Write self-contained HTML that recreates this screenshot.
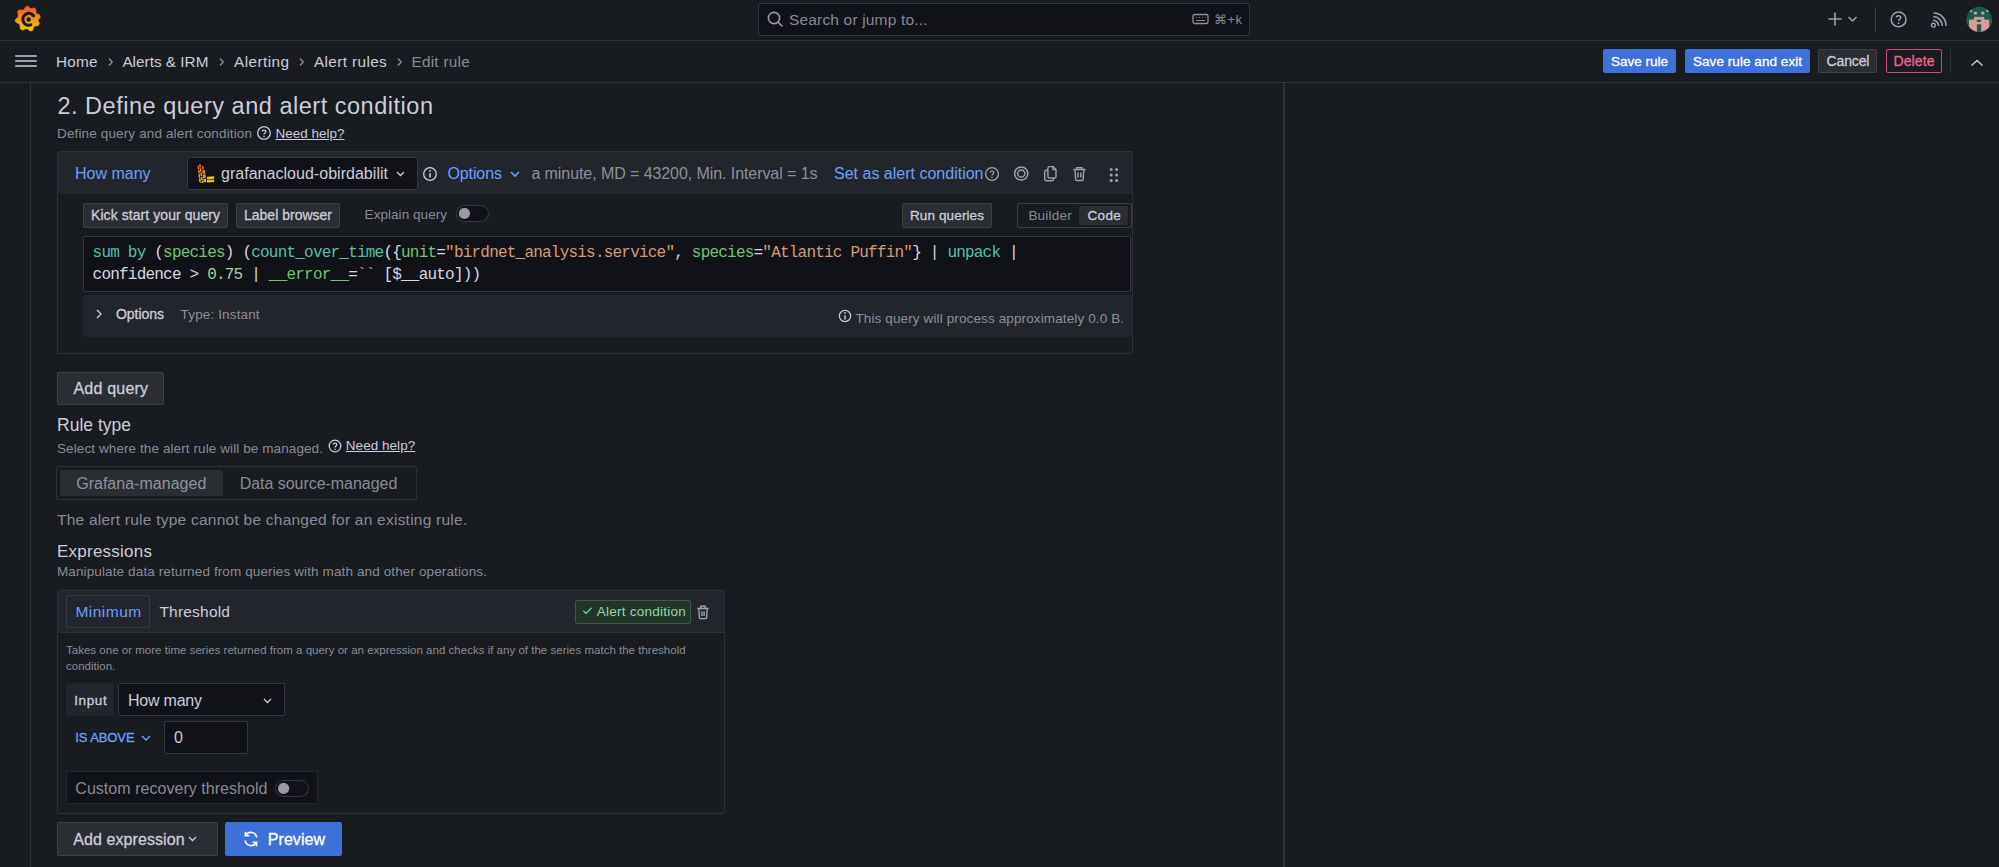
<!DOCTYPE html>
<html><head><meta charset="utf-8"><style>
html,body{margin:0;padding:0;}
body{width:1999px;height:867px;overflow:hidden;position:relative;background:#181b1f;font-family:'Liberation Sans', sans-serif;}
.a{position:absolute;}
.t{white-space:nowrap;line-height:1;}
.bl{display:inline-block;width:0;height:0;vertical-align:baseline;}
svg{overflow:visible;}
</style></head><body>
<div class="a" style="left:0px;top:40px;width:1999px;height:1px;background:rgba(204,204,220,0.12);"></div>
<svg class="a" style="left:10px;top:2px;" width="36" height="36" viewBox="0 0 36 36"><defs><linearGradient id="lg" gradientUnits="userSpaceOnUse" x1="0" y1="5" x2="0" y2="29"><stop offset="0" stop-color="#f05a28"/><stop offset="1" stop-color="#fbca0a"/></linearGradient></defs>
<path fill="url(#lg)" stroke="url(#lg)" stroke-width="0.6" stroke-linejoin="round" d="M13.77 7.76 L16.26 4.29 L18.46 4.22 L21.19 7.50 L19.86 7.12 L23.91 5.78 L25.73 7.01 L26.01 11.26 L26.01 11.26 L29.85 13.12 L30.31 15.26 L27.55 18.52 L27.66 17.66 L29.48 21.52 L28.49 23.48 L24.29 24.27 L24.03 24.49 L22.52 28.48 L20.42 29.12 L16.94 26.66 L16.25 26.58 L12.28 28.12 L10.39 26.99 L9.89 22.76 L9.40 22.05 L5.63 20.06 L5.25 17.90 L8.12 14.74 L8.38 13.74 L7.48 9.57 L8.89 7.89 L13.15 8.06Z"/>
<path fill="none" stroke="#181b1f" stroke-width="3.1" stroke-linecap="round" d="M23.57 13.83 A5.9 5.9 0 1 0 20.82 22.84"/>
<circle cx="18.6" cy="17.5" r="2.2" fill="#181b1f"/></svg>
<div class="a" style="left:758px;top:3px;width:492px;height:33px;background:#111217;border:1px solid rgba(204,204,220,0.20);box-sizing:border-box;border-radius:3px;"></div>
<svg class="a" style="left:767px;top:11px;" width="16" height="16" viewBox="0 0 16 16"><circle cx="7" cy="7" r="5.6" fill="none" stroke="#9a9aa8" stroke-width="1.6"/><path d="M11.2 11.2 L15 15" stroke="#9a9aa8" stroke-width="1.6" stroke-linecap="round"/></svg>
<div class="a t" id="t0" style="left:789.00px;top:11.50px;font-size:15.5px;color:rgba(204,204,220,0.65);font-weight:400;font-family:'Liberation Sans', sans-serif;letter-spacing:0.170px;"><i class="bl"></i>Search or jump to...</div>
<svg class="a" style="left:1192px;top:13px;" width="18" height="12" viewBox="0 0 18 12"><rect x="1" y="1.5" width="15" height="9" rx="1.5" fill="none" stroke="#8e8e9a" stroke-width="1.3"/><path d="M4 4.5h1M7 4.5h1M10 4.5h1M13 4.5h0.5M4 7.5h9" stroke="#8e8e9a" stroke-width="1.1"/></svg>
<div class="a t" id="t1" style="left:1214.00px;top:13.00px;font-size:13px;color:rgba(204,204,220,0.65);font-weight:400;font-family:'Liberation Sans', sans-serif;letter-spacing:0.453px;"><i class="bl"></i>&#8984;+k</div>
<svg class="a" style="left:1827px;top:11px;" width="16" height="16" viewBox="0 0 16 16"><path d="M8 1.5V14.5M1.5 8H14.5" stroke="#9fa0ab" stroke-width="1.6"/></svg>
<svg class="a" style="left:1847px;top:15px;" width="11" height="8" viewBox="0 0 11 8"><path d="M1.5 2 L5.5 6 L9.5 2" fill="none" stroke="#9fa0ab" stroke-width="1.5"/></svg>
<div class="a" style="left:1875px;top:7px;width:1px;height:25px;background:rgba(204,204,220,0.20);"></div>
<svg class="a" style="left:1889px;top:10px;" width="20" height="20" viewBox="0 0 20 20"><circle cx="9.6" cy="9.4" r="7.4" fill="none" stroke="#9fa0ab" stroke-width="1.5"/><path d="M7.4 7.6 C7.4 5.2 11.8 5.2 11.8 7.6 C11.8 9.2 9.6 9.2 9.6 11" fill="none" stroke="#9fa0ab" stroke-width="1.5"/><circle cx="9.6" cy="13.2" r="0.9" fill="#9fa0ab"/></svg>
<svg class="a" style="left:1930px;top:11px;" width="20" height="18" viewBox="0 0 20 18"><circle cx="3.4" cy="14.2" r="1.9" fill="none" stroke="#9fa0ab" stroke-width="1.4"/><path d="M3 9.2 A5.5 5.5 0 0 1 8.6 15" fill="none" stroke="#9fa0ab" stroke-width="1.5"/><path d="M3.2 5.6 A9 9 0 0 1 12.2 15" fill="none" stroke="#9fa0ab" stroke-width="1.5"/><path d="M3.6 2 A12.5 12.5 0 0 1 16 15" fill="none" stroke="#9fa0ab" stroke-width="1.5"/></svg>
<svg class="a" style="left:1966px;top:6px;" width="27" height="27" viewBox="0 0 27 27"><defs><clipPath id="cp"><circle cx="13.25" cy="13.35" r="12.6"/></clipPath></defs>
<g clip-path="url(#cp)"><rect width="27" height="27" fill="#145e4e"/>
<rect x="0" y="13.6" width="27" height="14" fill="#dc999c"/>
<rect x="8" y="10.9" width="10.3" height="3" fill="#dc999c"/>
<rect x="0" y="13" width="3" height="14" fill="#145e4e"/><rect x="23.2" y="13" width="4" height="14" fill="#145e4e"/><rect x="10.7" y="13.7" width="4.5" height="2.2" rx="1" fill="#145e4e"/>
<rect x="10.9" y="18.3" width="4.3" height="10" fill="#145e4e"/>
<rect x="7.8" y="5.8" width="3.1" height="2.6" fill="#dc999c"/><rect x="15.4" y="5.8" width="2.9" height="2.6" fill="#dc999c"/>
<rect x="3.2" y="3.5" width="2.7" height="2.5" fill="#dc999c"/><rect x="20.4" y="3.5" width="2.6" height="2.5" fill="#dc999c"/>
</g></svg>
<div class="a" style="left:0px;top:82px;width:1999px;height:1px;background:rgba(204,204,220,0.12);"></div>
<svg class="a" style="left:14px;top:54px;" width="24" height="14" viewBox="0 0 24 14"><path d="M1.8 2h20.4M1.8 7h20.4M1.8 12h20.4" stroke="#ccccdc" stroke-width="1.6" stroke-linecap="round"/></svg>
<div class="a t" id="t2" style="left:56.00px;top:53.50px;font-size:15.3px;color:#ccccdc;font-weight:400;font-family:'Liberation Sans', sans-serif;letter-spacing:0.262px;"><i class="bl"></i>Home</div>
<svg class="a" style="left:106.5px;top:57px;" width="7" height="10" viewBox="0 0 7 10"><path d="M2 1.5 L5.2 5 L2 8.5" fill="none" stroke="#8e8e9a" stroke-width="1.3"/></svg>
<div class="a t" id="t3" style="left:122.40px;top:53.50px;font-size:15.3px;color:#ccccdc;font-weight:400;font-family:'Liberation Sans', sans-serif;letter-spacing:0.014px;"><i class="bl"></i>Alerts &amp; IRM</div>
<svg class="a" style="left:217.7px;top:57px;" width="7" height="10" viewBox="0 0 7 10"><path d="M2 1.5 L5.2 5 L2 8.5" fill="none" stroke="#8e8e9a" stroke-width="1.3"/></svg>
<div class="a t" id="t4" style="left:234.00px;top:53.50px;font-size:15.3px;color:#ccccdc;font-weight:400;font-family:'Liberation Sans', sans-serif;letter-spacing:0.446px;"><i class="bl"></i>Alerting</div>
<svg class="a" style="left:297.6px;top:57px;" width="7" height="10" viewBox="0 0 7 10"><path d="M2 1.5 L5.2 5 L2 8.5" fill="none" stroke="#8e8e9a" stroke-width="1.3"/></svg>
<div class="a t" id="t5" style="left:314.00px;top:53.50px;font-size:15.3px;color:#ccccdc;font-weight:400;font-family:'Liberation Sans', sans-serif;letter-spacing:0.384px;"><i class="bl"></i>Alert rules</div>
<svg class="a" style="left:395.5px;top:57px;" width="7" height="10" viewBox="0 0 7 10"><path d="M2 1.5 L5.2 5 L2 8.5" fill="none" stroke="#8e8e9a" stroke-width="1.3"/></svg>
<div class="a t" id="t6" style="left:411.40px;top:53.50px;font-size:15.3px;color:rgba(204,204,220,0.65);font-weight:400;font-family:'Liberation Sans', sans-serif;letter-spacing:0.284px;"><i class="bl"></i>Edit rule</div>
<div class="a" style="left:1603px;top:49px;width:73px;height:24px;background:#3d71d9;border-radius:2px;"></div>
<div class="a t" id="t7" style="left:1611.00px;top:54.62px;font-size:13.5px;color:#ffffff;font-weight:400;-webkit-text-stroke:0.3px #ffffff;font-family:'Liberation Sans', sans-serif;letter-spacing:-0.006px;"><i class="bl"></i>Save rule</div>
<div class="a" style="left:1685px;top:49px;width:125px;height:24px;background:#3d71d9;border-radius:2px;"></div>
<div class="a t" id="t8" style="left:1693.00px;top:54.62px;font-size:13.5px;color:#ffffff;font-weight:400;-webkit-text-stroke:0.3px #ffffff;font-family:'Liberation Sans', sans-serif;letter-spacing:0.054px;"><i class="bl"></i>Save rule and exit</div>
<div class="a" style="left:1818px;top:49px;width:59px;height:24px;background:rgba(204,204,220,0.10);border:1px solid rgba(204,204,220,0.12);box-sizing:border-box;border-radius:2px;"></div>
<div class="a t" id="t9" style="left:1826.50px;top:53.60px;font-size:14px;color:#ccccdc;font-weight:400;-webkit-text-stroke:0.3px #ccccdc;font-family:'Liberation Sans', sans-serif;letter-spacing:-0.119px;"><i class="bl"></i>Cancel</div>
<div class="a" style="left:1886px;top:49px;width:56px;height:24px;border:1px solid #cc4a73;box-sizing:border-box;border-radius:2px;"></div>
<div class="a t" id="t10" style="left:1893.50px;top:53.60px;font-size:14px;color:#f2628f;font-weight:400;-webkit-text-stroke:0.3px #f2628f;font-family:'Liberation Sans', sans-serif;letter-spacing:0.106px;"><i class="bl"></i>Delete</div>
<div class="a" style="left:1950px;top:49px;width:1px;height:24px;background:rgba(204,204,220,0.12);"></div>
<svg class="a" style="left:1970px;top:58.5px;" width="14" height="9" viewBox="0 0 14 9"><path d="M1.5 6.5 L7 1.5 L12.5 6.5" fill="none" stroke="#ccccdc" stroke-width="1.4"/></svg>
<div class="a" style="left:30px;top:82px;width:1px;height:785px;background:rgba(204,204,220,0.12);"></div>
<div class="a" style="left:1283px;top:82px;width:2px;height:785px;background:rgba(204,204,220,0.12);"></div>
<div class="a t" id="t11" style="left:57.40px;top:94.71px;font-size:23.5px;color:#ccccdc;font-weight:400;font-family:'Liberation Sans', sans-serif;letter-spacing:0.519px;"><i class="bl"></i>2. Define query and alert condition</div>
<div class="a t" id="t12" style="left:57.00px;top:127.31px;font-size:13.5px;color:rgba(204,204,220,0.65);font-weight:400;font-family:'Liberation Sans', sans-serif;letter-spacing:0.141px;"><i class="bl"></i>Define query and alert condition</div>
<svg class="a" style="left:255.5px;top:125px;" width="16" height="16" viewBox="0 0 16 16"><circle cx="8" cy="8" r="6.3" fill="none" stroke="#ccccdc" stroke-width="1.3"/><path d="M6.2 6.6 C6.2 4.6 9.8 4.6 9.8 6.6 C9.8 8 8 8 8 9.5" fill="none" stroke="#ccccdc" stroke-width="1.3"/><circle cx="8" cy="11.3" r="0.8" fill="#ccccdc"/></svg>
<div class="a t" id="t13" style="left:275.40px;top:127.31px;font-size:13.5px;color:#ccccdc;font-weight:400;font-family:'Liberation Sans', sans-serif;letter-spacing:0.004px;text-decoration:underline;"><i class="bl"></i>Need help?</div>
<div class="a" style="left:57px;top:151px;width:1076px;height:203px;border:1px solid rgba(204,204,220,0.12);box-sizing:border-box;border-radius:2px;"></div>
<div class="a" style="left:58px;top:152px;width:1074px;height:42px;background:#22252b;"></div>
<div class="a t" id="t14" style="left:75.00px;top:166.40px;font-size:16px;color:#6e9fff;font-weight:400;font-family:'Liberation Sans', sans-serif;letter-spacing:0.003px;"><i class="bl"></i>How many</div>
<div class="a" style="left:187px;top:157px;width:231px;height:33px;background:#111217;border:1px solid rgba(204,204,220,0.20);box-sizing:border-box;border-radius:2px;"></div>
<svg class="a" style="left:190px;top:160px;" width="30" height="30" viewBox="0 0 30 30"><defs><linearGradient id="lk" gradientUnits="userSpaceOnUse" x1="0" y1="4" x2="0" y2="23"><stop offset="0" stop-color="#f05a28"/><stop offset="1" stop-color="#f2cc0c"/></linearGradient></defs>
<g stroke="url(#lk)" stroke-width="1.5" fill="none" stroke-dasharray="3.5 0.8"><path d="M8.2 5.6 L10.2 23"/><path d="M9.8 4 L12.4 23"/><path d="M12.6 6 L14.4 23"/><path d="M14.2 10 L15.6 22"/></g>
<g fill="#e9c21e"><path d="M17 16.8 L24.2 16.2 V18.8 L17 19.4Z"/><path d="M17 20 L24.2 19.6 V22 L17 22.4Z"/></g></svg>
<div class="a t" id="t15" style="left:221.00px;top:166.00px;font-size:16px;color:#ccccdc;font-weight:400;font-family:'Liberation Sans', sans-serif;letter-spacing:0.029px;"><i class="bl"></i>grafanacloud-obirdabilit</div>
<svg class="a" style="left:395px;top:169.5px;" width="12" height="8" viewBox="0 0 12 8"><path d="M2 2 L5.5 5.5 L9 2" fill="none" stroke="#ccccdc" stroke-width="1.3"/></svg>
<svg class="a" style="left:422.2px;top:165.5px;" width="16" height="16" viewBox="0 0 16 16"><circle cx="8" cy="8" r="6.3" fill="none" stroke="#ccccdc" stroke-width="1.3"/><path d="M8 7.2V11.4" stroke="#ccccdc" stroke-width="1.56"/><circle cx="8" cy="4.9" r="0.9" fill="#ccccdc"/></svg>
<div class="a t" id="t16" style="left:447.40px;top:166.40px;font-size:16px;color:#6e9fff;font-weight:400;font-family:'Liberation Sans', sans-serif;letter-spacing:-0.090px;"><i class="bl"></i>Options</div>
<svg class="a" style="left:509px;top:170px;" width="12" height="8" viewBox="0 0 12 8"><path d="M2 2 L6 6 L10 2" fill="none" stroke="#6e9fff" stroke-width="1.6"/></svg>
<div class="a t" id="t17" style="left:531.40px;top:166.40px;font-size:16px;color:rgba(204,204,220,0.65);font-weight:400;font-family:'Liberation Sans', sans-serif;letter-spacing:-0.075px;"><i class="bl"></i>a minute, MD = 43200, Min. Interval = 1s</div>
<div class="a t" id="t18" style="left:834.00px;top:166.40px;font-size:16px;color:#6e9fff;font-weight:400;font-family:'Liberation Sans', sans-serif;letter-spacing:0.004px;"><i class="bl"></i>Set as alert condition</div>
<svg class="a" style="left:984px;top:165.5px;" width="16" height="16" viewBox="0 0 16 16"><circle cx="8" cy="8" r="6.4" fill="none" stroke="#9fa0ab" stroke-width="1.3"/><path d="M6.2 6.6 C6.2 4.6 9.8 4.6 9.8 6.6 C9.8 8 8 8 8 9.5" fill="none" stroke="#9fa0ab" stroke-width="1.3"/><circle cx="8" cy="11.3" r="0.8" fill="#9fa0ab"/></svg>
<svg class="a" style="left:1013px;top:165px;" width="17" height="17" viewBox="0 0 17 17"><circle cx="8.2" cy="8.5" r="6.6" fill="none" stroke="#9fa0ab" stroke-width="1.5"/><circle cx="8.2" cy="8.5" r="3.6" fill="none" stroke="#9fa0ab" stroke-width="1.5"/></svg>
<svg class="a" style="left:1041px;top:165px;" width="17" height="17" viewBox="0 0 17 17"><path d="M8.5 1.6 H12 L15 4.6 V11.5 Q15 13 13.5 13 H8.5 Q6.9 13 6.9 11.5 V3.2 Q6.9 1.6 8.5 1.6Z M12 1.8 V4.6 H14.8" fill="none" stroke="#9fa0ab" stroke-width="1.4" stroke-linejoin="round"/><path d="M6.9 5.2 H5.3 Q3.7 5.2 3.7 6.8 V14.1 Q3.7 15.7 5.3 15.7 H11 Q12.6 15.7 12.6 14.1 V13" fill="none" stroke="#9fa0ab" stroke-width="1.4"/></svg>
<svg class="a" style="left:1071px;top:165px;" width="17" height="17" viewBox="0 0 17 17"><path d="M2.3 4.5 H14.5 M6 4.5 V2.6 H10.8 V4.5 M4 4.5 L4.6 14.4 Q4.7 15.5 5.8 15.5 H11 Q12.1 15.5 12.2 14.4 L12.8 4.5 M7 7.5 V12.5 M9.8 7.5 V12.5" fill="none" stroke="#9fa0ab" stroke-width="1.4"/></svg>
<svg class="a" style="left:1107px;top:166px;" width="14" height="18" viewBox="0 0 14 18"><g fill="#9fa0ab"><circle cx="4.2" cy="3.6" r="1.5"/><circle cx="9.6" cy="3.6" r="1.5"/><circle cx="4.2" cy="9" r="1.5"/><circle cx="9.6" cy="9" r="1.5"/><circle cx="4.2" cy="14.4" r="1.5"/><circle cx="9.6" cy="14.4" r="1.5"/></g></svg>
<div class="a" style="left:83px;top:203px;width:145px;height:25px;background:rgba(204,204,220,0.10);border:1px solid rgba(204,204,220,0.12);box-sizing:border-box;border-radius:2px;"></div>
<div class="a t" id="t19" style="left:91.00px;top:208.01px;font-size:14px;color:#ccccdc;font-weight:400;-webkit-text-stroke:0.3px #ccccdc;font-family:'Liberation Sans', sans-serif;letter-spacing:0.070px;"><i class="bl"></i>Kick start your query</div>
<div class="a" style="left:236px;top:203px;width:104px;height:25px;background:rgba(204,204,220,0.10);border:1px solid rgba(204,204,220,0.12);box-sizing:border-box;border-radius:2px;"></div>
<div class="a t" id="t20" style="left:244.00px;top:208.01px;font-size:14px;color:#ccccdc;font-weight:400;-webkit-text-stroke:0.3px #ccccdc;font-family:'Liberation Sans', sans-serif;letter-spacing:0.005px;"><i class="bl"></i>Label browser</div>
<div class="a t" id="t21" style="left:364.60px;top:208.21px;font-size:13.5px;color:rgba(204,204,220,0.65);font-weight:400;font-family:'Liberation Sans', sans-serif;letter-spacing:0.049px;"><i class="bl"></i>Explain query</div>
<div class="a" style="left:456px;top:205px;width:33px;height:17px;background:#111217;border:1px solid rgba(204,204,220,0.20);box-sizing:border-box;border-radius:9px;"></div>
<svg class="a" style="left:456px;top:205px;" width="33" height="17" viewBox="0 0 33 17"><circle cx="8.4" cy="8.4" r="5.6" fill="#9a9aa6"/></svg>
<div class="a" style="left:902px;top:203px;width:90px;height:25px;background:rgba(204,204,220,0.10);border:1px solid rgba(204,204,220,0.12);box-sizing:border-box;border-radius:2px;"></div>
<div class="a t" id="t22" style="left:910.00px;top:209.01px;font-size:13.5px;color:#ccccdc;font-weight:400;-webkit-text-stroke:0.3px #ccccdc;font-family:'Liberation Sans', sans-serif;letter-spacing:0.120px;"><i class="bl"></i>Run queries</div>
<div class="a" style="left:1017px;top:203px;width:115px;height:25px;border:1px solid rgba(204,204,220,0.20);box-sizing:border-box;border-radius:2px;"></div>
<div class="a" style="left:1079px;top:206px;width:49px;height:19px;background:rgba(204,204,220,0.10);border-radius:2px;"></div>
<div class="a t" id="t23" style="left:1028.40px;top:209.01px;font-size:13.5px;color:rgba(204,204,220,0.65);font-weight:400;font-family:'Liberation Sans', sans-serif;letter-spacing:0.228px;"><i class="bl"></i>Builder</div>
<div class="a t" id="t24" style="left:1087.60px;top:209.01px;font-size:13.5px;color:#ccccdc;font-weight:400;-webkit-text-stroke:0.3px #ccccdc;font-family:'Liberation Sans', sans-serif;letter-spacing:0.273px;"><i class="bl"></i>Code</div>
<div class="a" style="left:83px;top:236px;width:1048px;height:56px;background:#111217;border:1px solid rgba(204,204,220,0.20);box-sizing:border-box;border-radius:2px;"></div>
<div class="a t" id="t25" style="left:92.60px;top:245.00px;font-size:16px;color:#d8d8e0;font-weight:400;font-family:'Liberation Mono', monospace;letter-spacing:-0.79px;"><i class="bl"></i><span style="color:#4fc0a8">sum by</span> (<span style="color:#6dc56f">species</span>) (<span style="color:#4fc0a8">count_over_time</span>({<span style="color:#6dc56f">unit</span>=<span style="color:#d59b73">"birdnet_analysis.service"</span>, <span style="color:#6dc56f">species</span>=<span style="color:#d59b73">"Atlantic Puffin"</span>} | <span style="color:#4fc0a8">unpack</span> |</div>
<div class="a t" id="t26" style="left:92.60px;top:267.00px;font-size:16px;color:#d8d8e0;font-weight:400;font-family:'Liberation Mono', monospace;letter-spacing:-0.79px;"><i class="bl"></i>confidence &gt; <span style="color:#a9d3a0">0.75</span> | <span style="color:#6dc56f">__error__</span>=<span style="color:#d59b73">``</span> [$__auto]))</div>
<div class="a" style="left:83px;top:295px;width:1049px;height:42px;background:#22252b;border-radius:2px;"></div>
<svg class="a" style="left:94px;top:308px;" width="10" height="12" viewBox="0 0 10 12"><path d="M3 2 L7 6 L3 10" fill="none" stroke="#ccccdc" stroke-width="1.4"/></svg>
<div class="a t" id="t27" style="left:116.00px;top:306.51px;font-size:14px;color:#ccccdc;font-weight:400;-webkit-text-stroke:0.3px #ccccdc;font-family:'Liberation Sans', sans-serif;letter-spacing:-0.042px;"><i class="bl"></i>Options</div>
<div class="a t" id="t28" style="left:180.60px;top:307.51px;font-size:13.5px;color:rgba(204,204,220,0.65);font-weight:400;font-family:'Liberation Sans', sans-serif;letter-spacing:0.142px;"><i class="bl"></i>Type: Instant</div>
<svg class="a" style="left:837.4px;top:307.6px;" width="16" height="16" viewBox="0 0 16 16"><circle cx="8" cy="8" r="5.6" fill="none" stroke="#ccccdc" stroke-width="1.2"/><path d="M8 7.2V11.4" stroke="#ccccdc" stroke-width="1.44"/><circle cx="8" cy="4.9" r="0.9" fill="#ccccdc"/></svg>
<div class="a t" id="t29" style="left:855.50px;top:311.81px;font-size:13.5px;color:rgba(204,204,220,0.65);font-weight:400;font-family:'Liberation Sans', sans-serif;letter-spacing:0.120px;"><i class="bl"></i>This query will process approximately 0.0 B.</div>
<div class="a" style="left:57px;top:372px;width:107px;height:33px;background:rgba(204,204,220,0.10);border:1px solid rgba(204,204,220,0.12);box-sizing:border-box;border-radius:2px;"></div>
<div class="a t" id="t30" style="left:73.50px;top:380.75px;font-size:16px;color:#ccccdc;font-weight:400;-webkit-text-stroke:0.3px #ccccdc;font-family:'Liberation Sans', sans-serif;letter-spacing:0.195px;"><i class="bl"></i>Add query</div>
<div class="a t" id="t31" style="left:57.00px;top:416.61px;font-size:17.5px;color:#ccccdc;font-weight:400;font-family:'Liberation Sans', sans-serif;letter-spacing:0.008px;"><i class="bl"></i>Rule type</div>
<div class="a t" id="t32" style="left:57.00px;top:441.62px;font-size:13.5px;color:rgba(204,204,220,0.65);font-weight:400;font-family:'Liberation Sans', sans-serif;letter-spacing:0.095px;"><i class="bl"></i>Select where the alert rule will be managed.</div>
<svg class="a" style="left:326.5px;top:437.5px;" width="16" height="16" viewBox="0 0 16 16"><circle cx="8" cy="8" r="5.8" fill="none" stroke="#ccccdc" stroke-width="1.3"/><path d="M6.2 6.6 C6.2 4.6 9.8 4.6 9.8 6.6 C9.8 8 8 8 8 9.5" fill="none" stroke="#ccccdc" stroke-width="1.3"/><circle cx="8" cy="11.3" r="0.8" fill="#ccccdc"/></svg>
<div class="a t" id="t33" style="left:345.80px;top:439.40px;font-size:13.5px;color:#ccccdc;font-weight:400;font-family:'Liberation Sans', sans-serif;letter-spacing:0.037px;text-decoration:underline;"><i class="bl"></i>Need help?</div>
<div class="a" style="left:56px;top:466px;width:361px;height:34px;border:1px solid rgba(204,204,220,0.12);box-sizing:border-box;border-radius:2px;"></div>
<div class="a" style="left:60px;top:470px;width:163px;height:26px;background:rgba(204,204,220,0.10);border-radius:2px;"></div>
<div class="a t" id="t34" style="left:76.20px;top:475.50px;font-size:16px;color:rgba(204,204,220,0.65);font-weight:400;font-family:'Liberation Sans', sans-serif;letter-spacing:0.017px;"><i class="bl"></i>Grafana-managed</div>
<div class="a t" id="t35" style="left:239.70px;top:475.50px;font-size:16px;color:rgba(204,204,220,0.65);font-weight:400;font-family:'Liberation Sans', sans-serif;letter-spacing:-0.040px;"><i class="bl"></i>Data source-managed</div>
<div class="a t" id="t36" style="left:57.00px;top:511.61px;font-size:15.5px;color:rgba(204,204,220,0.65);font-weight:400;font-family:'Liberation Sans', sans-serif;letter-spacing:0.239px;"><i class="bl"></i>The alert rule type cannot be changed for an existing rule.</div>
<div class="a t" id="t37" style="left:57.00px;top:543.30px;font-size:17px;color:#ccccdc;font-weight:400;font-family:'Liberation Sans', sans-serif;letter-spacing:0.239px;"><i class="bl"></i>Expressions</div>
<div class="a t" id="t38" style="left:57.00px;top:565.31px;font-size:13.5px;color:rgba(204,204,220,0.65);font-weight:400;font-family:'Liberation Sans', sans-serif;letter-spacing:0.121px;"><i class="bl"></i>Manipulate data returned from queries with math and other operations.</div>
<div class="a" style="left:57px;top:590px;width:668px;height:224px;border:1px solid rgba(204,204,220,0.12);box-sizing:border-box;border-radius:2px;"></div>
<div class="a" style="left:58px;top:591px;width:666px;height:41px;background:#22252b;"></div>
<div class="a" style="left:58px;top:632px;width:666px;height:1px;background:rgba(204,204,220,0.12);"></div>
<div class="a" style="left:66px;top:595px;width:84px;height:33px;border:1px solid rgba(204,204,220,0.12);box-sizing:border-box;border-radius:2px;"></div>
<div class="a t" id="t39" style="left:75.40px;top:604.00px;font-size:15.5px;color:#6e9fff;font-weight:400;font-family:'Liberation Sans', sans-serif;letter-spacing:0.487px;"><i class="bl"></i>Minimum</div>
<div class="a t" id="t40" style="left:159.40px;top:604.00px;font-size:15.5px;color:#ccccdc;font-weight:400;font-family:'Liberation Sans', sans-serif;letter-spacing:0.208px;"><i class="bl"></i>Threshold</div>
<div class="a" style="left:575px;top:600px;width:116px;height:24px;background:#23352b;border:1px solid #365c43;box-sizing:border-box;border-radius:2px;"></div>
<svg class="a" style="left:581px;top:604px;" width="13" height="13" viewBox="0 0 13 13"><path d="M2.3 6.8 L5 9.5 L10.5 3.8" fill="none" stroke="#6ccf8e" stroke-width="1.4"/></svg>
<div class="a t" id="t41" style="left:596.80px;top:605.21px;font-size:13.5px;color:#95d6a4;font-weight:400;font-family:'Liberation Sans', sans-serif;letter-spacing:0.238px;"><i class="bl"></i>Alert condition</div>
<svg class="a" style="left:695px;top:604px;" width="16" height="17" viewBox="0 0 16 17"><path d="M2.3 4.5 H13.7 M5.8 4.5 V2.3 H10.2 V4.5 M3.8 4.5 L4.4 13.6 Q4.5 14.6 5.5 14.6 H10.5 Q11.5 14.6 11.6 13.6 L12.2 4.5 M6.9 7.2 V12 M9.1 7.2 V12" fill="none" stroke="#9fa0ab" stroke-width="1.4"/></svg>
<div class="a t" id="t42" style="left:66.00px;top:644.80px;font-size:11.5px;color:rgba(204,204,220,0.65);font-weight:400;font-family:'Liberation Sans', sans-serif;letter-spacing:0.013px;"><i class="bl"></i>Takes one or more time series returned from a query or an expression and checks if any of the series match the threshold</div>
<div class="a t" id="t43" style="left:66.00px;top:661.00px;font-size:11.5px;color:rgba(204,204,220,0.65);font-weight:400;font-family:'Liberation Sans', sans-serif;"><i class="bl"></i>condition.</div>
<div class="a" style="left:66px;top:683px;width:48px;height:33px;background:#22252b;border-radius:2px;"></div>
<div class="a t" id="t44" style="left:74.20px;top:694.01px;font-size:13.5px;color:#ccccdc;font-weight:400;-webkit-text-stroke:0.3px #ccccdc;font-family:'Liberation Sans', sans-serif;letter-spacing:0.617px;"><i class="bl"></i>Input</div>
<div class="a" style="left:118px;top:683px;width:167px;height:33px;background:#111217;border:1px solid rgba(204,204,220,0.20);box-sizing:border-box;border-radius:2px;"></div>
<div class="a t" id="t45" style="left:128.00px;top:692.81px;font-size:16px;color:#ccccdc;font-weight:400;font-family:'Liberation Sans', sans-serif;letter-spacing:-0.225px;"><i class="bl"></i>How many</div>
<svg class="a" style="left:262px;top:697px;" width="11" height="8" viewBox="0 0 11 8"><path d="M2 2 L5.5 5.5 L9 2" fill="none" stroke="#ccccdc" stroke-width="1.3"/></svg>
<div class="a t" id="t46" style="left:75.30px;top:731.21px;font-size:13px;color:#6e9fff;font-weight:400;-webkit-text-stroke:0.3px #6e9fff;font-family:'Liberation Sans', sans-serif;letter-spacing:-0.098px;"><i class="bl"></i>IS ABOVE</div>
<svg class="a" style="left:140px;top:734px;" width="12" height="8" viewBox="0 0 12 8"><path d="M2 2 L6 6 L10 2" fill="none" stroke="#6e9fff" stroke-width="1.5"/></svg>
<div class="a" style="left:164px;top:721px;width:84px;height:33px;background:#111217;border:1px solid rgba(204,204,220,0.20);box-sizing:border-box;border-radius:2px;"></div>
<div class="a t" id="t47" style="left:174.00px;top:729.50px;font-size:16px;color:#ccccdc;font-weight:400;font-family:'Liberation Sans', sans-serif;"><i class="bl"></i>0</div>
<div class="a" style="left:66px;top:771px;width:252px;height:33px;background:#111217;border:1px solid rgba(204,204,220,0.12);box-sizing:border-box;border-radius:2px;"></div>
<div class="a t" id="t48" style="left:75.30px;top:780.61px;font-size:16px;color:rgba(204,204,220,0.65);font-weight:400;font-family:'Liberation Sans', sans-serif;letter-spacing:0.038px;"><i class="bl"></i>Custom recovery threshold</div>
<div class="a" style="left:275px;top:780px;width:34px;height:17px;background:#111217;border:1px solid rgba(204,204,220,0.20);box-sizing:border-box;border-radius:9px;"></div>
<svg class="a" style="left:275px;top:780px;" width="34" height="17" viewBox="0 0 34 17"><circle cx="8.6" cy="8.4" r="5.6" fill="#9a9aa6"/></svg>
<div class="a" style="left:57px;top:822px;width:161px;height:34px;background:rgba(204,204,220,0.10);border:1px solid rgba(204,204,220,0.12);box-sizing:border-box;border-radius:2px;"></div>
<div class="a t" id="t49" style="left:73.20px;top:831.90px;font-size:16px;color:#ccccdc;font-weight:400;-webkit-text-stroke:0.3px #ccccdc;font-family:'Liberation Sans', sans-serif;letter-spacing:0.085px;"><i class="bl"></i>Add expression</div>
<svg class="a" style="left:187px;top:835px;" width="11" height="8" viewBox="0 0 11 8"><path d="M2 2 L5.5 5.5 L9 2" fill="none" stroke="#ccccdc" stroke-width="1.4"/></svg>
<div class="a" style="left:225px;top:822px;width:117px;height:34px;background:#3d71d9;border-radius:2px;"></div>
<svg class="a" style="left:242px;top:830px;" width="18" height="18" viewBox="0 0 18 18"><g transform="translate(18,0) scale(-1,1)"><path d="M3.2 7.5 A6 6 0 0 1 14.2 5.2 M14.8 10.5 A6 6 0 0 1 3.8 12.8" fill="none" stroke="#fff" stroke-width="1.6"/><path d="M14.6 1.8 V5.8 H10.6 M3.4 16.2 V12.2 H7.4" fill="none" stroke="#fff" stroke-width="1.6"/></g></svg>
<div class="a t" id="t50" style="left:267.80px;top:831.90px;font-size:16px;color:#ffffff;font-weight:400;-webkit-text-stroke:0.3px #ffffff;font-family:'Liberation Sans', sans-serif;letter-spacing:0.049px;"><i class="bl"></i>Preview</div>
</body></html>
